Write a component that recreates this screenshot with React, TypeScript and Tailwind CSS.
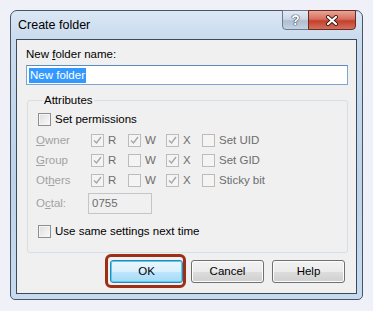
import React from 'react';

const font = "font-['Liberation_Sans',Arial,sans-serif]";

function Box({ checked, disabled }: { checked?: boolean; disabled?: boolean }) {
  return (
    <span
      className={
        'flex h-[13px] w-[13px] shrink-0 items-center justify-center border ' +
        (disabled
          ? 'border-[#bcbcbc] bg-[#f4f4f4]'
          : 'border-[#8e8f8f] bg-gradient-to-br from-[#dcdcdc] to-[#fbfbfb] shadow-[inset_0_0_0_1px_#f4f4f4]')
      }
    >
      {checked && (
        <svg width="11" height="11" viewBox="0 0 11 11">
          <path d="M2 5.5 L4.5 8 L9 2" fill="none" stroke="#a6a6a6" strokeWidth="1.4" />
        </svg>
      )}
    </span>
  );
}

function Check({ label, checked, disabled }: { label: React.ReactNode; checked?: boolean; disabled?: boolean }) {
  return (
    <div className="flex items-center gap-[4px]">
      <Box checked={checked} disabled={disabled} />
      <span className={disabled ? 'text-[#6d6d6d]' : 'text-black'}>{label}</span>
    </div>
  );
}

function Btn({ children, def }: { children: React.ReactNode; def?: boolean }) {
  return (
    <button
      className={
        'relative h-[23px] w-[73px] rounded-[3px] border text-[11.5px] text-black ' +
        (def
          ? 'border-[#3c7fb1] bg-[linear-gradient(#eaf6fd_0%,#d9f0fc_50%,#bee6fd_51%,#a7d9f5_100%)] shadow-[inset_0_0_0_1px_#48d2f5]'
          : 'border-[#707070] bg-[linear-gradient(#f2f2f2_0%,#ebebeb_50%,#dddddd_51%,#cfcfcf_100%)] shadow-[inset_0_0_0_1px_#fcfcfc]')
      }
    >
      {children}
      {def && (
        <span className="pointer-events-none absolute -bottom-[6px] -left-[6px] -right-[4px] -top-[7px] rounded-[6px] border-[3px] border-[#9e2f17]" />
      )}
    </button>
  );
}

export default function App() {
  const rows = [
    { name: <><u>O</u>wner</>, r: true, w: true, x: true, extra: 'Set UID' },
    { name: <><u>G</u>roup</>, r: true, w: false, x: true, extra: 'Set GID' },
    { name: <>Ot<u>h</u>ers</>, r: true, w: false, x: true, extra: 'Sticky bit' },
  ];

  return (
    <div className={`h-[311px] w-[373px] bg-[#eff0f8] pl-[10px] pt-[10px] text-[11.5px] ${font}`}>
      <div className="flex h-[290px] w-[353px] flex-col rounded-t-[7px] rounded-b-[5px] border border-[#4a5564] bg-[linear-gradient(180deg,#dbe7f4_0px,#c9dbee_28px,#bcd3ea_60%,#c6dbef_100%)] px-[5px] pb-[5px]">
        <div className="flex h-[28px] items-start justify-between">
          <span className="self-center pl-[2px] pt-[1px] text-[12.5px] text-black">Create folder</span>
          <div className="-mt-px mr-[1px] flex">
            <div className="flex h-[20px] w-[27px] items-center justify-center rounded-bl-[4px] border border-[#6b7a8e] bg-[linear-gradient(#e3eaf3_0%,#cdd8e5_45%,#aebdd0_55%,#c4d2e2_100%)]">
              <span className="text-[14px] font-bold leading-none text-white [text-shadow:0_0_1px_#2d3a4c,0_0_1px_#2d3a4c,0_0_1px_#2d3a4c]">?</span>
            </div>
            <div className="-ml-px flex h-[20px] w-[48px] items-center justify-center rounded-br-[4px] border border-[#6e2a22] bg-[linear-gradient(#e8a596_0%,#d7705f_45%,#c4402c_55%,#d3705c_100%)]">
              <svg width="14" height="11" viewBox="0 0 14 11">
                <path d="M3 2 L11 9 M11 2 L3 9" stroke="#3a1a16" strokeWidth="4" strokeLinecap="round" />
                <path d="M3 2 L11 9 M11 2 L3 9" stroke="#ffffff" strokeWidth="2.2" strokeLinecap="round" />
              </svg>
            </div>
          </div>
        </div>

        <div className="flex flex-1 flex-col border border-[#3e4a58] bg-[#f0f0f0] pl-[9px] pr-[8px] pt-[7px] pb-[10px]">
          <div className="leading-[14px]">
            New <u>f</u>older name:
          </div>
          <div className="mt-[4px] flex h-[20px] items-center border border-[#7ea4cf] border-t-[#5b8bbf] bg-white pl-[2px]">
            <span className="bg-[#3399ff] px-[1px] leading-[15px] text-white">New folder</span>
          </div>

          <fieldset className="mt-[8px] ml-[1px] rounded-[3px] border border-[#d5dfe5] pb-[11px] pl-[10px]">
            <legend className="ml-[5px] px-[1px] leading-[14px]">Attributes</legend>
            <div className="mt-[4px]">
              <Check label="Set permissions" />
            </div>
            <div className="mt-[2px] grid grid-cols-[55px_37px_38px_36px_1fr] -ml-[2px]">
              {rows.map((r, i) => (
                <React.Fragment key={i}>
                  <div className="flex h-[20px] items-center text-[#a2a2a2]">{r.name}</div>
                  <div className="flex items-center"><Check label="R" checked={r.r} disabled /></div>
                  <div className="flex items-center"><Check label="W" checked={r.w} disabled /></div>
                  <div className="flex items-center"><Check label="X" checked={r.x} disabled /></div>
                  <div className="flex items-center"><Check label={r.extra} disabled /></div>
                </React.Fragment>
              ))}
            </div>
            <div className="-ml-[2px] mt-[3px] flex items-center">
              <span className="w-[52px] text-[#a2a2a2]">O<u>c</u>tal:</span>
              <div className="flex h-[21px] w-[64px] items-center border border-[#c5c5c5] bg-[#f0f0f0] pl-[3px] text-[#6d6d6d]">0755</div>
            </div>
            <div className="mt-[9px]">
              <Check label="Use same settings next time" />
            </div>
          </fieldset>

          <div className="mt-auto flex justify-end gap-[8px] pr-[3px]">
            <Btn def>OK</Btn>
            <Btn>Cancel</Btn>
            <Btn>Help</Btn>
          </div>
        </div>
      </div>
    </div>
  );
}
